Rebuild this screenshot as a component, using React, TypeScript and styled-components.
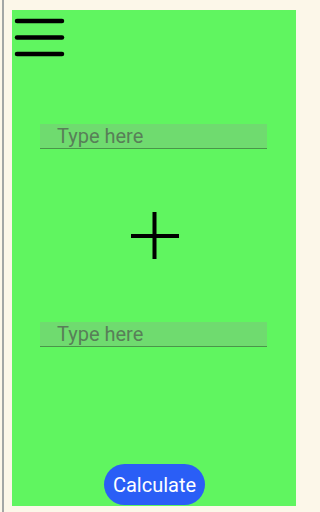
import styled, { createGlobalStyle } from 'styled-components';

const GlobalStyle = createGlobalStyle`
  html, body {
    margin: 0;
    padding: 0;
    background: #fcf7e9;
    font-family: Roboto, "Noto Sans", sans-serif;
  }
`;

const Page = styled.div`
  display: flex;
  width: 303px;
  height: 512px;
  box-sizing: border-box;
  padding: 10px 7px 6px 2px;
`;

const Rail = styled.div`
  width: 2px;
  margin-top: -10px;
  margin-bottom: -6px;
  background: #a3a7a6;
`;

const Screen = styled.div`
  margin-left: 8px;
  width: 284px;
  height: 496px;
  background: #60f560;
  display: flex;
  flex-direction: column;
  align-items: center;
  box-sizing: border-box;
  padding-top: 7px;
`;

const MenuButton = styled.button`
  align-self: flex-start;
  margin-left: 1px;
  padding: 0;
  border: none;
  background: transparent;
  display: block;
  width: 53px;
  height: 41px;
  cursor: pointer;
`;

const Field = styled.input<{ $gap: number }>`
  margin-top: ${(p) => p.$gap}px;
  margin-left: -1px;
  width: 227px;
  height: 25px;
  box-sizing: border-box;
  padding: 0 0 0 17px;
  border: none;
  border-bottom: 1.5px solid #4a964a;
  background: #6fdb6f;
  font-family: Roboto, "Noto Sans", sans-serif;
  font-size: 20px;
  color: #222;
  outline: none;

  &::placeholder {
    color: #587f58;
  }
`;

const Operator = styled.div`
  margin-top: 63px;
  width: 48px;
  height: 47px;
  margin-left: 1px;
`;

const CalcButton = styled.button`
  margin-top: auto;
  margin-bottom: 1px;
  margin-left: 1px;
  width: 101px;
  height: 41px;
  border: none;
  border-radius: 21px;
  background: #2a5ef6;
  color: #fff;
  font-family: Roboto, "Noto Sans", sans-serif;
  font-size: 20px;
  padding: 0;
  cursor: pointer;
`;

const MenuIcon = () => (
  <svg width="53" height="41" viewBox="0 0 53 41">
    {[4, 20.5, 37].map((y) => (
      <line key={y} x1="4" y1={y} x2="49" y2={y} stroke="#000" strokeWidth="4.5" strokeLinecap="round" />
    ))}
  </svg>
);

const PlusIcon = () => (
  <svg width="48" height="47" viewBox="0 0 48 47">
    <path d="M0 24H48M23.5 0V47" stroke="#000" strokeWidth="4" fill="none" />
  </svg>
);

export default function App() {
  return (
    <>
      <GlobalStyle />
      <Page>
        <Rail />
        <Screen>
          <MenuButton aria-label="menu">
            <MenuIcon />
          </MenuButton>
          <Field $gap={66} placeholder="Type here" />
          <Operator>
            <PlusIcon />
          </Operator>
          <Field $gap={63} placeholder="Type here" />
          <CalcButton>Calculate</CalcButton>
        </Screen>
      </Page>
    </>
  );
}
